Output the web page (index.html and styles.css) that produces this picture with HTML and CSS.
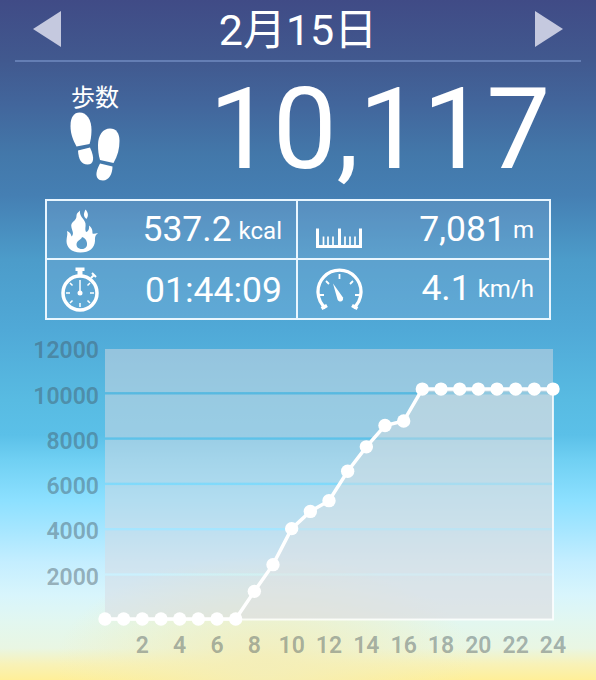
FILE: index.html
```
<!DOCTYPE html>
<html lang="ja">
<head>
    <meta charset="UTF-8">
    <meta name="viewport" content="width=device-width, initial-scale=1.0">
    <title>歩数計</title>
    <link rel="stylesheet" href="styles.css">
</head>
<body>

    <header class="date-bar">
        <svg class="arrow" viewBox="0 0 28 36"><path d="M28 0V36L0 18Z"/></svg>
        <h1>2月15日</h1>
        <svg class="arrow" viewBox="0 0 28 36"><path d="M0 0V36L28 18Z"/></svg>
    </header>

    <section class="steps">
        <div class="steps-label">
            <span>歩数</span>
            <svg class="feet" viewBox="0 0 50 70">
                <path d="M6.500 34.500C3 28 .5 22 .5 14C.5 5 4 .5 9.500 .5C17 .5 21.500 8 21.500 18C21.500 24 20.500 29 19.500 32Z"/>
                <path d="M8 38.500L20 35.500C22.500 41 23.500 45 23 48C22.500 51 20.500 52.500 17.500 52.500C11 52.500 8.500 47 8 38.500Z"/>
                <path d="M30 48C28.500 43 28 38 28 33C28 23 33 16.500 40 16.500C46 16.500 49.500 21 49.500 29C49.500 37 47.500 44 43.500 51Z"/>
                <path d="M30 51.500L42.500 54.500C42.500 62 39 68.500 33 68.500C28 68.500 26 65 26.500 61C27 57 28.500 54.500 30 51.500Z"/>
            </svg>
        </div>
        <div class="steps-count">10,117</div>
    </section>

    <section class="stats">
        <div class="stat">
            <svg viewBox="0 0 48 50">
                <path fill-rule="evenodd" d="M21.500 46.500C12 46.500 7.500 41 7.500 35C7.500 31 9 28.500 8 25C11 26 12 28 12.500 30.500C16.500 27.500 11 22 12.500 18C14 15 17.500 14.500 17.500 9.500C17.500 7.500 19.500 6 21 4.500C20 10.500 25.500 12.500 26.500 17.500C27 20.500 25.500 23.500 27 26C29.500 25.500 30.500 22.500 30 19.500C33.500 22 33.500 25 33.500 27.500C35 28 37 27.500 39 27C36 29.500 36 31 36 35C35.500 42 30.500 46.500 21.500 46.500ZM23 31C22.500 33.500 17.500 34.500 17.500 38.500C17.500 41.500 20 43 23 43C26.500 43 28.500 40.500 28 37C27.500 33.500 25.500 32 23 31Z"/>
                <path d="M26.500 3.500C29.500 7 29.500 10 27.500 13C24 10 24.500 8 26.500 3.500Z"/>
            </svg>
            <p>537.2<small>kcal</small></p>
        </div>
        <div class="stat">
            <svg viewBox="0 0 48 50">
                <path class="line" stroke-width="3" d="M2.500 22.500V40.500H45.500V22.500M24.500 22.500V40"/>
                <path class="line" stroke-width="1.700" d="M8.500 30.500V40M13 30.500V40M18 30.500V40M30 30.500V40M35 30.500V40M40 30.500V40"/>
            </svg>
            <p>7,081<small class="raised">m</small></p>
        </div>
        <div class="stat">
            <svg viewBox="0 0 48 50">
                <circle class="line" stroke-width="3.500" cx="21" cy="28" r="17"/>
                <path d="M16.500 2.500H25.500V6H23.500V11H18.500V6H16.500Z"/>
                <path class="line" stroke-width="2" d="M32 13L35 10M33 8L37 12"/>
                <path class="line" stroke-width="1.500" d="M21 15V28M21 38V42M7 28H11M31 28H35M11 18L13.500 20.500M31 18L28.500 20.500M11 38L13.500 35.500M31 38L28.500 35.500"/>
                <circle cx="21" cy="28" r="2.500"/>
            </svg>
            <p>01:44:09</p>
        </div>
        <div class="stat">
            <svg viewBox="0 0 48 50">
                <path class="line" stroke-width="3.300" d="M10.500 43A21.500 21.500 0 1 1 38.500 43"/>
                <path class="line" stroke-width="3.500" d="M6.500 43.500L12 40.500M42.500 43.500L37 40.500"/>
                <path class="line" stroke-width="1.800" d="M4 30H9M45 30H40M24.500 9V14M11 16L14 19M38 16L35 19"/>
                <path d="M18 18.500L28 32.500C29 37 24 38 22.500 34.500Z"/>
            </svg>
            <p>4.1<small class="raised">km/h</small></p>
        </div>
    </section>

    <svg class="chart" id="chart" viewBox="0 0 596 350"></svg>

    <script src="chart.js"></script>

</body>
</html>
```
FILE: styles.css
```
* {
    box-sizing: border-box;
}

body {
    margin: 0;
    width: 596px;
    height: 680px;
    overflow: hidden;
    font-family: Roboto, "Noto Sans CJK JP", sans-serif;
    color: #fff;
    background:
        radial-gradient(ellipse 210px 110px at 265px 665px, rgba(244, 238, 184, 0.95), rgba(244, 238, 184, 0)),
        linear-gradient(#404b86 0, #41598f 61px, #42669c 105px, #4378aa 155px, #457fb3 195px,
            #4c9cca 260px, #50a9d7 330px, #58bbe2 400px, #5bc0e8 435px, #70d0f3 460px,
            #8ce0ff 500px, #a6e6ff 530px, #c4eeff 562px, #d8f5fc 595px, #e2f7f0 622px,
            #e9f6e3 648px, #f8f2b8 664px, #ffef98 680px);
}

.date-bar {
    display: flex;
    justify-content: space-between;
    align-items: center;
    height: 62px;
    margin: 0 15px;
    padding: 0 18px 2px;
    border-bottom: 2px solid #647eb4;
}

.date-bar h1 {
    margin: 0;
    padding-top: 2px;
    font-size: 43px;
    font-weight: 400;
    line-height: 57px;
}

.arrow {
    width: 28px;
    height: 36px;
    fill: #c5c9df;
}

.steps {
    display: flex;
    justify-content: space-between;
    height: 137px;
    padding: 22px 46px 0 70px;
}

.steps-label {
    display: flex;
    flex-direction: column;
    width: 50px;
    font-size: 24px;
    line-height: 28px;
}

.steps-label span {
    text-align: center;
}

.feet {
    width: 50px;
    height: 70px;
    fill: #fff;
}

.steps-count {
    font-size: 114px;
    line-height: 90px;
    letter-spacing: -0.3px;
}

.stats {
    display: grid;
    grid-template-columns: 251px 251px;
    grid-template-rows: 59px 58px;
    width: 506px;
    height: 121px;
    margin-left: 45px;
    border: 2px solid #e9f6ff;
}

.stat {
    display: flex;
    align-items: center;
    justify-content: space-between;
    padding: 0 14px 0 12px;
    background: rgba(145, 180, 220, 0.25);
}

.stat:nth-child(odd) {
    border-right: 2px solid #e9f6ff;
}

.stat:nth-child(even) {
    padding: 0 15px 0 17px;
}

.stat:nth-child(-n+2) {
    padding-top: 2px;
    border-bottom: 2px solid #e9f6ff;
}

.stat:nth-child(n+3) {
    padding-top: 2px;
}

.stat svg {
    width: 48px;
    height: 50px;
    fill: #fff;
}

.stat .line {
    fill: none;
    stroke: #fff;
}

.stat p {
    margin: 0;
    font-size: 35.5px;
    line-height: 42px;
}

.stat small {
    position: relative;
    top: -2px;
    margin-left: 7px;
    font-size: 24px;
}

.stat .raised {
    top: -3px;
}

.chart {
    display: block;
    width: 596px;
    height: 350px;
    margin-top: 10px;
}

.chart .band {
    fill: rgba(215, 218, 226, 0.5);
}

.chart .area {
    fill: rgba(224, 226, 226, 0.4);
}

.chart .edge {
    fill: none;
    stroke: rgba(255, 255, 255, 0.8);
    stroke-width: 2;
}

.chart .series {
    fill: none;
    stroke: #fff;
    stroke-width: 3.5;
}

.chart circle {
    fill: #fff;
}

.chart text {
    fill: rgba(65, 80, 90, 0.43);
    font-size: 23px;
    font-weight: 600;
}

.chart .y-label {
    text-anchor: end;
}

.chart .x-label {
    text-anchor: middle;
}
```
FILE: chart.js
```
// steps reached at the end of each hour, 0 to 24
var steps = [0, 0, 0, 0, 0, 0, 0, 0, 1220, 2400, 3990, 4750, 5225, 6525, 7600, 8540, 8740,
    10150, 10150, 10150, 10150, 10150, 10150, 10150, 10150];

var left = 105, right = 553, top0 = 19, bottom = 289;
var chart = document.getElementById('chart');
var parts = '';

function x(hour) {
    return left + (right - left) * hour / 24;
}

function y(value) {
    return bottom - value * 0.02265;
}

for (var v = 0; v < 12000; v += 2000) {
    var from = v === 10000 ? top0 : y(v + 2000) + 2;
    var to = v === 0 ? bottom : y(v) - 0.4;
    parts += `<rect class="band" x="${left}" y="${from}" width="${right - left}" height="${to - from}"/>`;
}

var points = steps.map(function(value, hour) {
    return x(hour) + ',' + y(value);
}).join(' ');

parts += `<polygon class="area" points="${points} ${right},${bottom}"/>`;
parts += `<path class="edge" d="M${left} ${bottom + 0.5}H${right}V${y(10150)}"/>`;
parts += `<polyline class="series" points="${points}"/>`;

steps.forEach(function(value, hour) {
    parts += `<circle cx="${x(hour)}" cy="${y(value)}" r="6.7"/>`;
});

for (var v = 2000; v <= 12000; v += 2000) {
    parts += `<text class="y-label" x="99" y="${y(v) + 11}">${v}</text>`;
}

for (var h = 2; h <= 24; h += 2) {
    parts += `<text class="x-label" x="${x(h)}" y="323">${h}</text>`;
}

chart.innerHTML = parts;
```
